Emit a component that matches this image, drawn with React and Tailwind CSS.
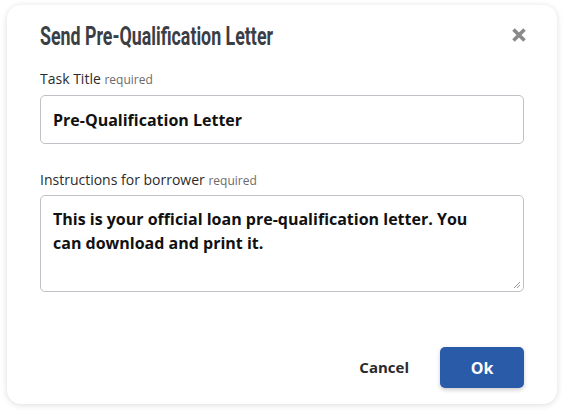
export default function App() {
  return (
    <div className="w-[564px] h-[413px] bg-white pt-[5px] pl-[7px]" style={{ fontFamily: '"Open Sans", sans-serif' }}>
      <div className="w-[550px] h-[399px] rounded-[14px] bg-white shadow-[0_1px_6px_rgba(0,0,0,0.14)] px-[33px] pt-[17px] flex flex-col">
        <div className="flex items-center justify-between h-[28px]">
          <h1
            className="text-[26px] font-bold text-[#3b3e45] leading-none whitespace-nowrap origin-left scale-x-[0.685]"
            style={{ fontFamily: 'Roboto, sans-serif' }}
          >
            Send Pre-Qualification Letter
          </h1>
          <svg width="14" height="14" viewBox="0 0 14 14" className="mr-[-2px] mt-[-3px]">
            <path d="M1.5 1.5 L12.5 12.5 M12.5 1.5 L1.5 12.5" stroke="#8a8a8a" strokeWidth="3.6" strokeLinecap="butt" />
          </svg>
        </div>
        <label className="mt-[19px] text-[14px] text-[#2b2b2b] leading-[20px]">
          Task Title <span className="text-[12px] text-[#6b6b6b]">required</span>
        </label>
        <div className="mt-[5px] h-[49px] border border-[#bfc1c6] rounded-[5px] flex items-center px-[12px] text-[16px] font-bold text-[#111]">
          Pre-Qualification Letter
        </div>
        <label className="mt-[26px] text-[14px] text-[#2b2b2b] leading-[20px]">
          Instructions for borrower <span className="text-[12px] text-[#6b6b6b]">required</span>
        </label>
        <div className="relative mt-[4px] h-[97px] border border-[#bfc1c6] rounded-[5px] pl-[12px] pr-[50px] pt-[11px] text-[16px] font-bold text-[#111] leading-[24px]">
          This is your official loan pre-qualification letter. You can download and print it.
          <svg width="8" height="8" viewBox="0 0 8 8" className="absolute right-[2px] bottom-[2px]">
            <path d="M7 1 L1 7 M7 4 L4 7" stroke="#999" strokeWidth="1" />
          </svg>
        </div>
        <div className="mt-auto mb-[16px] flex items-center justify-end gap-[31px]">
          <button className="h-[40px] text-[15px] font-bold text-[#2a2a2a]">Cancel</button>
          <button className="w-[84px] h-[41px] rounded-[5px] bg-[#2a5ba8] text-white text-[16px] font-bold shadow-[0_2px_4px_rgba(0,0,0,0.2)]">Ok</button>
        </div>
      </div>
    </div>
  );
}
